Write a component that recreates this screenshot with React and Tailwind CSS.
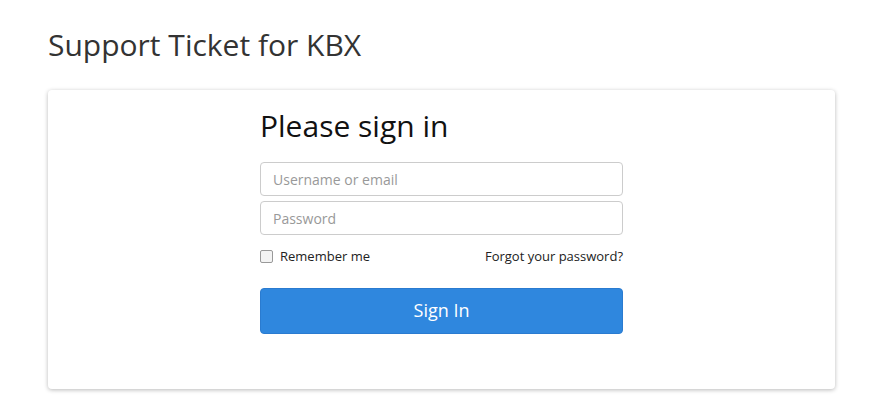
import React from 'react'

const App = () => {
  return (
    <div className="min-h-screen bg-white px-12 pt-[22px]" style={{ fontFamily: '"Open Sans", sans-serif' }}>
      {/* Titre */}
      <h1 className="text-[30px] leading-[46px] text-[#333] font-normal">Support Ticket for KBX</h1>

      {/* Carte */}
      <div className="mt-[22px] w-[787px] rounded bg-white shadow-[0_1px_4px_rgba(0,0,0,0.28)] pt-[16px] pb-[55px]">
        <div className="mx-auto w-[363px]">
          <h2 className="text-[30px] leading-[40px] text-[#111] font-normal">Please sign in</h2>

          <div className="mt-[16px] flex flex-col gap-[5px]">
            <input
              type="text"
              placeholder="Username or email"
              className="h-[34px] w-full rounded border border-[#ccc] px-3 text-[14px] text-[#555] placeholder:text-[#999] outline-none"
            />
            <input
              type="password"
              placeholder="Password"
              className="h-[34px] w-full rounded border border-[#ccc] px-3 text-[14px] text-[#555] placeholder:text-[#999] outline-none"
            />
          </div>

          <div className="mt-[12px] flex items-center justify-between text-[13px] text-[#222]">
            <label className="flex items-center gap-[7px]">
              <span className="inline-block h-[13px] w-[13px] rounded-[2px] border border-[#999] bg-[#f3f3f3]" />
              Remember me
            </label>
            <span>Forgot your password?</span>
          </div>

          <button className="mt-[21px] h-[46px] w-full rounded border border-[#2a7bd0] bg-[#2f87de] text-[18px] text-white">
            Sign In
          </button>
        </div>
      </div>
    </div>
  )
}

export default App
